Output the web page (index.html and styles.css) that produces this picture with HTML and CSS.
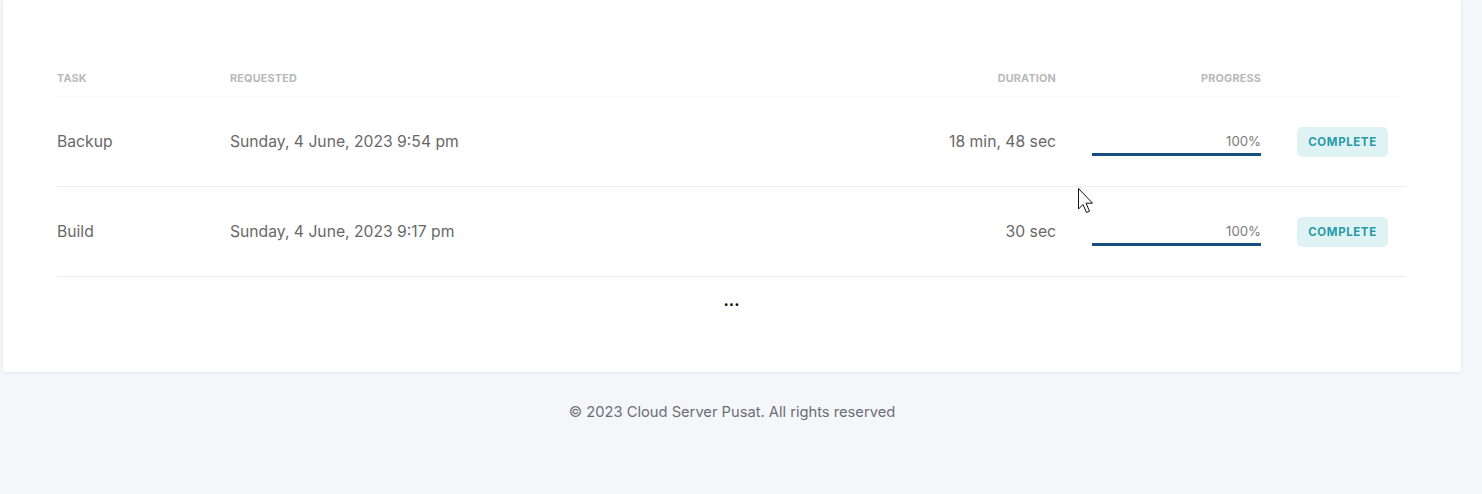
FILE: index.html
```html
<!DOCTYPE html>
<html lang="en">
<head>
<meta charset="utf-8">
<title>Tasks</title>
<link rel="stylesheet" href="styles.css">
</head>
<body>
<div class="page">
  <div class="card">
    <div class="grid head">
      <div class="th">Task</div>
      <div class="th">Requested</div>
      <div class="th right">Duration</div>
      <div class="th right">Progress</div>
      <div class="th"></div>
    </div>
    <div class="grid row">
      <div class="td">Backup</div>
      <div class="td">Sunday, 4 June, 2023 9:54 pm</div>
      <div class="td right">18 min, 48 sec</div>
      <div class="td progress">
        <span class="pct">100%</span>
        <div class="bar"><div class="fill" style="width:100%"></div></div>
      </div>
      <div class="td"><span class="badge">Complete</span></div>
    </div>
    <div class="grid row">
      <div class="td">Build</div>
      <div class="td">Sunday, 4 June, 2023 9:17 pm</div>
      <div class="td right">30 sec</div>
      <div class="td progress">
        <span class="pct">100%</span>
        <div class="bar"><div class="fill" style="width:100%"></div></div>
      </div>
      <div class="td"><span class="badge">Complete</span></div>
    </div>
    <div class="more">...</div>
  </div>
  <footer class="footer">© 2023 Cloud Server Pusat. All rights reserved</footer>
</div>
<svg class="cursor" width="20" height="30" viewBox="0 0 20 30" xmlns="http://www.w3.org/2000/svg">
  <path d="M0.5 0.5 L0.5 21 L5 16.5 L8.5 24.5 L11.5 23.2 L8 15.2 L14.5 15.2 Z" fill="#fff" stroke="#111" stroke-width="1" stroke-linejoin="miter"/>
</svg>
</body>
</html>
```
FILE: styles.css
```css
* { box-sizing: border-box; }
html, body { margin: 0; padding: 0; }
body {
  background: #f5f6fa;
  font-family: Inter, "Noto Sans", "Liberation Sans", sans-serif;
  color: #666a6e;
  height: 494px;
  overflow: hidden;
  position: relative;
}
.page {
  margin: 0 21px 0 3px;
}
.card {
  background: #fff;
  padding: 60px 55px 0 54px;
  border-radius: 0 0 3px 3px;
  box-shadow: 0 1px 3px rgba(20, 30, 60, 0.08);
  height: 372px;
}
.grid {
  display: grid;
  grid-template-columns: 137px 1fr 150px 169px 109px;
  column-gap: 36px;
  align-items: center;
}
.head {
  height: 37px;
  border-bottom: 1px solid #fafafa;
}
.th {
  font-size: 10.8px;
  font-weight: 700;
  text-transform: uppercase;
  color: #b8b8b8;
  letter-spacing: 0.2px;
  line-height: 12px;
  padding-top: 2px;
}
.right { text-align: right; }
.row {
  height: 90px;
  border-bottom: 1px solid #ececec;
}
.td {
  font-size: 15.7px;
  line-height: 20px;
  color: #686868;
}
.progress {
  position: relative;
  text-align: right;
  height: 20px;
}
.pct {
  font-size: 13.2px;
  color: #7c7c7c;
  line-height: 18px;
  display: block;
}
.bar {
  position: absolute;
  left: 0;
  right: 0;
  top: 21px;
  height: 3px;
  background: #e8eef4;
}
.fill {
  height: 100%;
  background: #174e80;
}
.badge {
  display: inline-block;
  height: 30px;
  line-height: 30px;
  width: 91px;
  text-align: center;
  border-radius: 5px;
  background: #dff3f5;
  color: #2a9ba6;
  font-size: 11.5px;
  font-weight: 700;
  text-transform: uppercase;
  letter-spacing: 0.6px;
}
.more {
  text-align: center;
  font-size: 16px;
  font-weight: 700;
  color: #111;
  line-height: 20px;
  padding-top: 13px;
}
.footer {
  text-align: center;
  font-size: 14.7px;
  line-height: 20px;
  color: #6b6f76;
  padding-top: 30px;
}
.cursor {
  position: absolute;
  left: 1078px;
  top: 188px;
}
```
